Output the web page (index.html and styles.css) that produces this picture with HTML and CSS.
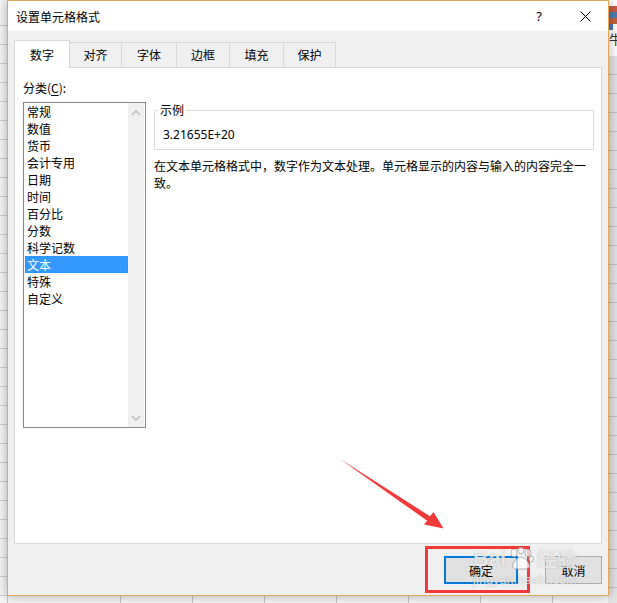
FILE: index.html
```html
<!DOCTYPE html>
<html lang="zh-CN">
<head>
<meta charset="utf-8">
<title>设置单元格格式</title>
<link rel="stylesheet" href="styles.css">
</head>
<body>
<div class="desk">
  <div class="chart-bits">
    <span class="bar bar-o"></span><span class="bar bar-b"></span><span class="bar bar-o"></span><span class="bar bar-b short"></span>
    <span class="side-char">牛</span>
  </div>
  <div class="right-strip"></div>

  <div class="dialog">
    <div class="titlebar">
      <span class="title">设置单元格格式</span>
      <span class="tb-btn help">?</span>
      <span class="tb-btn close">
        <svg width="11" height="11" viewBox="0 0 11 11"><path d="M0.5 0.5 L10.5 10.5 M10.5 0.5 L0.5 10.5" stroke="#000" stroke-width="1" fill="none"/></svg>
      </span>
    </div>

    <div class="body">
      <div class="tabs">
        <div class="tab active w56">数字</div>
        <div class="tab w52">对齐</div>
        <div class="tab w55">字体</div>
        <div class="tab w53">边框</div>
        <div class="tab w54">填充</div>
        <div class="tab w52">保护</div>
      </div>

      <div class="panel">
        <div class="panel-grid">
          <div class="cat-label">分类(<u>C</u>):</div>
          <div class="listbox">
            <ul class="items">
              <li>常规</li>
              <li>数值</li>
              <li>货币</li>
              <li>会计专用</li>
              <li>日期</li>
              <li>时间</li>
              <li>百分比</li>
              <li>分数</li>
              <li>科学记数</li>
              <li class="selected">文本</li>
              <li>特殊</li>
              <li>自定义</li>
            </ul>
            <div class="scrollbar">
              <svg width="16" height="16" viewBox="0 0 16 16"><path d="M4 10 L8 6 L12 10" stroke="#c2c2c2" stroke-width="1.6" fill="none"/></svg>
              <svg width="16" height="16" viewBox="0 0 16 16"><path d="M4 6 L8 10 L12 6" stroke="#c2c2c2" stroke-width="1.6" fill="none"/></svg>
            </div>
          </div>
          <div class="right-col">
            <fieldset class="sample">
              <legend>示例</legend>
              <div class="sample-value">3.21655E+20</div>
            </fieldset>
            <p class="desc">在文本单元格格式中，数字作为文本处理。单元格显示的内容与输入的内容完全一致。</p>
          </div>
        </div>
      </div>

      <div class="buttons">
        <button class="btn btn-default">确定</button>
        <button class="btn btn-cancel">取消</button>
      </div>
    </div>
  </div>

  <div class="highlight"></div>
  <svg class="arrow" width="617" height="603" viewBox="0 0 617 603">
    <polygon points="340,459 430,516.2 433.5,512 443.5,528.5 424,524.5 427.2,520.8" fill="#f23a3a"/>
  </svg>

  <div class="watermark">
    <div class="wm-top">
      <span class="wm-bai">Bai</span>
      <svg class="wm-paw" width="26" height="24" viewBox="0 0 26 24">
        <g fill="rgba(255,255,255,0.7)" stroke="rgba(120,120,120,0.5)" stroke-width="1">
          <ellipse cx="6" cy="6" rx="3" ry="4"/>
          <ellipse cx="13" cy="3.5" rx="3" ry="3.2"/>
          <ellipse cx="20" cy="6" rx="3" ry="4"/>
          <ellipse cx="23.2" cy="12" rx="2.4" ry="3"/>
          <path d="M4 20 Q6 11 13 10 Q20 11 22 20 Q19 23 13 22 Q7 23 4 20 Z"/>
        </g>
      </svg>
      <span class="wm-jy">经验</span>
    </div>
    <div class="wm-url">jingyan.baidu.com</div>
  </div>
</div>
</body>
</html>
```

FILE: styles.css
```css
* { box-sizing: border-box; }

html, body {
  margin: 0;
  padding: 0;
  background: #ffffff;
}

body {
  font-family: "Noto Sans", "Noto Sans CJK SC", sans-serif;
  font-size: 12px;
  color: #000;
}

.desk {
  position: relative;
  width: 617px;
  height: 603px;
  overflow: hidden;
  background-color: #f7f7f7;
  background-image:
    repeating-linear-gradient(to bottom, transparent 0 18px, #cdcdcd 18px 19px),
    repeating-linear-gradient(to right, transparent 0 71px, #c6c6c6 71px 72px);
  background-position: 0 7px, 49px 0;
}

.right-strip {
  position: absolute;
  right: 0;
  top: 56px;
  width: 9px;
  height: 547px;
  background-color: #e4e4e4;
  background-image: repeating-linear-gradient(to bottom, transparent 0 18px, #c4c4c4 18px 19px);
}

.chart-bits {
  position: absolute;
  right: 0;
  top: 0;
  width: 9px;
  height: 56px;
  background: #fff;
  padding-top: 6px;
  display: flex;
  flex-direction: column;
}

.bar { display: block; height: 6px; width: 9px; }
.bar-o { background: #c8603e; }
.bar-b { background: #4a7cb5; }
.bar.short { width: 5px; }

.side-char {
  font-family: "Noto Sans CJK SC", sans-serif;
  font-size: 13px;
  line-height: 18px;
  margin-left: 1px;
  color: #333;
}

.dialog {
  position: relative;
  margin-left: 7px;
  width: 602px;
  height: 596px;
  border: 1px solid #e3a65b;
  background: #f0f0f0;
  box-shadow: 0 0 11px rgba(0, 0, 0, 0.32);
  display: flex;
  flex-direction: column;
}

.titlebar {
  height: 30px;
  background: #ffffff;
  display: flex;
  align-items: center;
  flex: none;
}

.title {
  flex: 1;
  padding-left: 8px;
  font-family: "Noto Sans CJK SC", sans-serif;
  font-size: 12px;
  line-height: 16px;
  padding-top: 1px;
}

.tb-btn {
  width: 46px;
  height: 30px;
  display: flex;
  align-items: center;
  justify-content: center;
}

.help {
  font-family: "Noto Sans", sans-serif;
  font-size: 13px;
}

.close svg { display: block; margin-left: 1px; }

.body {
  flex: 1;
  padding: 9px 6px 0 6px;
  display: flex;
  flex-direction: column;
}

.tabs {
  display: flex;
  align-items: flex-end;
  height: 27px;
  flex: none;
}

.tab {
  height: 25px;
  border-top: 1px solid #d9d9d9;
  border-right: 1px solid #d9d9d9;
  background: #f0f0f0;
  font-family: "Noto Sans CJK SC", sans-serif;
  font-size: 12px;
  line-height: 16px;
  text-align: center;
  padding-top: 4px;
}

.tab.active {
  position: relative;
  z-index: 1;
  height: 28px;
  margin-bottom: -1px;
  background: #ffffff;
  border-left: 1px solid #d9d9d9;
  padding-top: 6px;
}

.w56 { width: 56px; }
.w52 { width: 52px; }
.w55 { width: 55px; }
.w53 { width: 53px; }
.w54 { width: 54px; }

.panel {
  height: 477px;
  flex: none;
  background: #ffffff;
  border: 1px solid #d9d9d9;
  padding: 12px 7px 0 8px;
}

.panel-grid {
  display: grid;
  grid-template-columns: 123px 1fr;
  grid-template-rows: auto auto;
  column-gap: 8px;
  row-gap: 6px;
}

.cat-label {
  grid-column: 1 / 3;
  font-family: "Noto Sans CJK SC", sans-serif;
  line-height: 16px;
}

.cat-label u { text-underline-offset: 2px; }

.listbox {
  height: 326px;
  border: 1px solid #828790;
  display: flex;
  background: #fff;
}

.items {
  list-style: none;
  margin: 0;
  padding: 0;
  flex: 1;
  font-family: "Noto Sans CJK SC", sans-serif;
}

.items li {
  height: 17px;
  line-height: 17px;
  margin: 0 0 0 1px;
  padding-left: 2px;
}

.items li.selected {
  background: #3399ff;
  color: #fff;
  outline: 1px dotted #c46d12;
  outline-offset: -1px;
}

.scrollbar {
  width: 16px;
  margin: 0 1px 0 0;
  background: #f0f0f0;
  display: flex;
  flex-direction: column;
  justify-content: space-between;
  padding: 2px 0 1px 0;
}

.scrollbar svg { display: block; }

.right-col { min-width: 0; }

.sample {
  margin: 0;
  padding: 9px 8px 6px 8px;
  border: 1px solid #dcdcdc;
  min-width: 0;
}

.sample legend {
  font-family: "Noto Sans CJK SC", sans-serif;
  line-height: 16px;
  padding: 0 2px;
  margin-left: -5px;
}

.sample-value {
  font-family: "Noto Sans", sans-serif;
  line-height: 16px;
}

.desc {
  margin: 7px 0 0 0;
  font-family: "Noto Sans CJK SC", sans-serif;
  line-height: 17px;
  letter-spacing: 0;
}

.buttons {
  display: flex;
  justify-content: flex-end;
  gap: 27px;
  padding-top: 12px;
}

.btn {
  height: 28px;
  background: #e1e1e1;
  border: 1px solid #adadad;
  font-family: "Noto Sans CJK SC", sans-serif;
  font-size: 12px;
  color: #000;
  padding: 0;
  margin: 0;
}

.btn-default {
  width: 74px;
  border: 2px solid #0078d7;
}

.btn-cancel { width: 57px; }

.highlight {
  position: absolute;
  left: 425px;
  top: 546px;
  width: 105px;
  height: 47px;
  border: 3px solid #f23a3a;
}

.arrow {
  position: absolute;
  left: 0;
  top: 0;
  pointer-events: none;
}

.watermark {
  position: absolute;
  left: 473px;
  top: 545px;
  width: 115px;
  color: rgba(255, 255, 255, 0.75);
  text-shadow: 0 0 1px rgba(90, 90, 90, 0.5);
  pointer-events: none;
}

.wm-top {
  display: flex;
  align-items: center;
  height: 28px;
}

.wm-bai {
  font-family: "Liberation Sans", sans-serif;
  font-weight: bold;
  font-size: 22px;
  line-height: 24px;
  letter-spacing: -0.5px;
}

.wm-paw { margin: 0 3px 0 2px; }

.wm-jy {
  font-family: "Noto Sans CJK SC", sans-serif;
  font-size: 20px;
  line-height: 24px;
  font-weight: bold;
}

.wm-url {
  font-family: "Liberation Sans", sans-serif;
  font-size: 12px;
  line-height: 14px;
  letter-spacing: 0.4px;
}
```
